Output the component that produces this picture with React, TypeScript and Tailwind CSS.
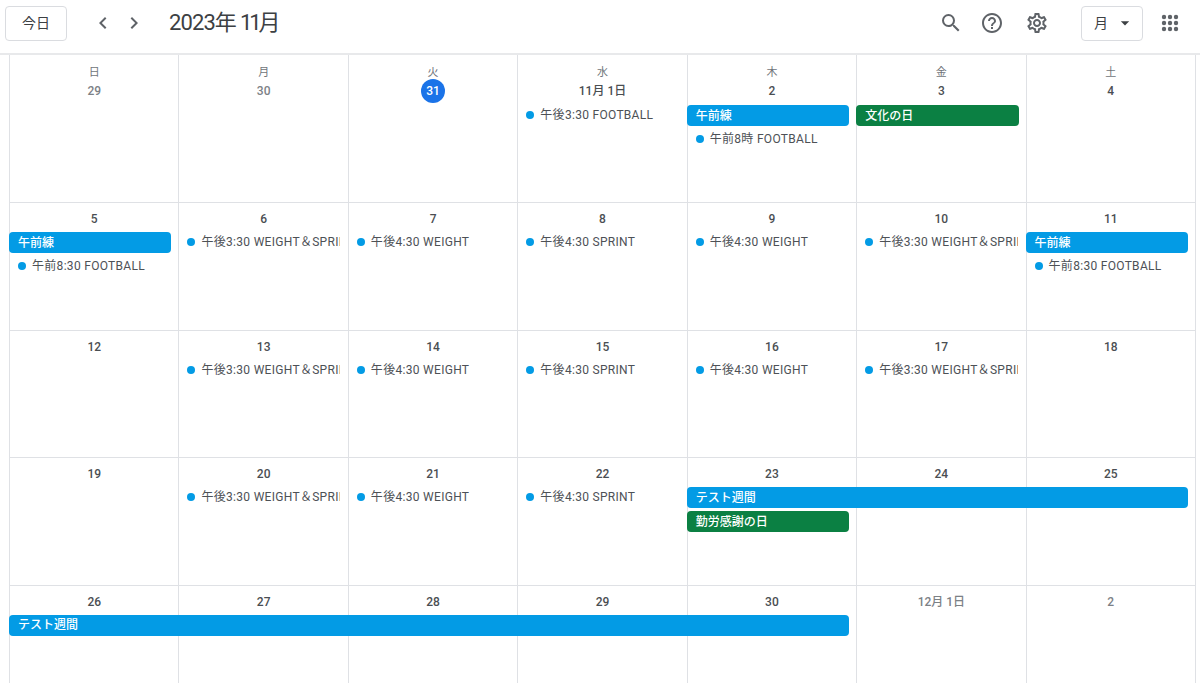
import { MdSearch, MdHelpOutline, MdOutlineSettings, MdChevronLeft, MdChevronRight, MdArrowDropDown } from 'react-icons/md';

type Ev = { col: string; row: string; label: string; kind: 'blue' | 'green' | 'timed'; span?: string };
type Day = { label: string; muted?: boolean; today?: boolean; weekday?: string };

const timed = (col: string, row: string, label: string): Ev => ({ col, row, label, kind: 'timed' });

const weeks: { days: Day[]; events: Ev[] }[] = [
  {
    days: [
      { label: '29', muted: true, weekday: '日' },
      { label: '30', muted: true, weekday: '月' },
      { label: '31', today: true, weekday: '火' },
      { label: '11月 1日', weekday: '水' },
      { label: '2', weekday: '木' },
      { label: '3', weekday: '金' },
      { label: '4', weekday: '土' },
    ],
    events: [
      timed('col-start-4', 'row-start-2', '午後3:30 FOOTBALL'),
      { col: 'col-start-5', row: 'row-start-2', label: '午前練', kind: 'blue' },
      timed('col-start-5', 'row-start-3', '午前8時 FOOTBALL'),
      { col: 'col-start-6', row: 'row-start-2', label: '文化の日', kind: 'green' },
    ],
  },
  {
    days: ['5', '6', '7', '8', '9', '10', '11'].map((label) => ({ label })),
    events: [
      { col: 'col-start-1', row: 'row-start-2', label: '午前練', kind: 'blue' },
      timed('col-start-1', 'row-start-3', '午前8:30 FOOTBALL'),
      timed('col-start-2', 'row-start-2', '午後3:30 WEIGHT＆SPRINT'),
      timed('col-start-3', 'row-start-2', '午後4:30 WEIGHT'),
      timed('col-start-4', 'row-start-2', '午後4:30 SPRINT'),
      timed('col-start-5', 'row-start-2', '午後4:30 WEIGHT'),
      timed('col-start-6', 'row-start-2', '午後3:30 WEIGHT＆SPRINT'),
      { col: 'col-start-7', row: 'row-start-2', label: '午前練', kind: 'blue' },
      timed('col-start-7', 'row-start-3', '午前8:30 FOOTBALL'),
    ],
  },
  {
    days: ['12', '13', '14', '15', '16', '17', '18'].map((label) => ({ label })),
    events: [
      timed('col-start-2', 'row-start-2', '午後3:30 WEIGHT＆SPRINT'),
      timed('col-start-3', 'row-start-2', '午後4:30 WEIGHT'),
      timed('col-start-4', 'row-start-2', '午後4:30 SPRINT'),
      timed('col-start-5', 'row-start-2', '午後4:30 WEIGHT'),
      timed('col-start-6', 'row-start-2', '午後3:30 WEIGHT＆SPRINT'),
    ],
  },
  {
    days: ['19', '20', '21', '22', '23', '24', '25'].map((label) => ({ label })),
    events: [
      timed('col-start-2', 'row-start-2', '午後3:30 WEIGHT＆SPRINT'),
      timed('col-start-3', 'row-start-2', '午後4:30 WEIGHT'),
      timed('col-start-4', 'row-start-2', '午後4:30 SPRINT'),
      { col: 'col-start-5', row: 'row-start-2', span: 'col-span-3', label: 'テスト週間', kind: 'blue' },
      { col: 'col-start-5', row: 'row-start-3', label: '勤労感謝の日', kind: 'green' },
    ],
  },
  {
    days: [
      { label: '26' },
      { label: '27' },
      { label: '28' },
      { label: '29' },
      { label: '30' },
      { label: '12月 1日', muted: true },
      { label: '2', muted: true },
    ],
    events: [{ col: 'col-start-1', row: 'row-start-2', span: 'col-span-5', label: 'テスト週間', kind: 'blue' }],
  },
];

const dayCols = ['col-start-1', 'col-start-2', 'col-start-3', 'col-start-4', 'col-start-5', 'col-start-6', 'col-start-7'];

const EventChip = ({ ev }: { ev: Ev }) => {
  if (ev.kind === 'timed') {
    return (
      <div className={`${ev.col} ${ev.row} z-10 mr-2 flex h-[20px] items-center overflow-hidden pl-[9px] text-xs tracking-[0.3px] whitespace-nowrap text-[#4d5156]`}>
        <span className="mr-[6px] h-2 w-2 shrink-0 rounded-full bg-[#039be5]" />
        <span>{ev.label}</span>
      </div>
    );
  }
  const bg = ev.kind === 'green' ? 'bg-[#0b8043]' : 'bg-[#039be5]';
  return (
    <div className={`${ev.col} ${ev.row} ${ev.span ?? 'col-span-1'} ${bg} z-10 mr-[7px] flex h-[21px] items-center rounded pl-[9px] text-xs font-medium whitespace-nowrap text-white`}>
      {ev.label}
    </div>
  );
};

const DayCell = ({ day, col, first }: { day: Day; col: string; first: boolean }) => (
  <div className={`${col} row-span-4 row-start-1 flex flex-col items-center border-l border-[#dfe1e5] ${first ? 'pt-[10px]' : 'pt-[6px]'}`}>
    {day.weekday && <div className="h-[16px] text-[11px] leading-4 text-[#70757a]">{day.weekday}</div>}
    {day.today ? (
      <div className="-mt-[2px] flex h-6 w-6 items-center justify-center rounded-full bg-[#1a73e8] text-xs font-medium text-white">{day.label}</div>
    ) : (
      <div className={`h-5 text-xs leading-5 font-medium ${day.muted ? 'text-[#7c8186]' : 'text-[#4a4e52]'}`}>{day.label}</div>
    )}
  </div>
);

export default function App() {
  return (
    <div className="h-[683px] w-[1200px] overflow-hidden bg-white font-['Roboto','Noto_Sans_CJK_JP',sans-serif]">
      <header className="flex h-[55px] items-center border-b-2 border-[#e8e9eb] pb-[7px] pl-[5px] text-[#5f6368]">
        <button className="h-[35px] w-[62px] rounded border border-[#dadce0] text-sm text-[#3c4043]">今日</button>
        <MdChevronLeft className="ml-[24px] text-[#5f6368]" size={24} />
        <MdChevronRight className="ml-[7px] text-[#5f6368]" size={24} />
        <h1 className="ml-[23px] flex text-[22px] leading-7 font-normal text-[#3c4043]">
          <span className="tracking-[-0.9px]">2023</span>
          <span>年</span>
          <span className="ml-[3px] tracking-[-3px]">11</span>
          <span>月</span>
        </h1>
        <div className="ml-auto flex items-center">
          <MdSearch size={24} />
          <MdHelpOutline className="ml-[17px]" size={24} />
          <MdOutlineSettings className="ml-[21px]" size={24} />
          <button className="ml-[32px] flex h-[35px] w-[62px] items-center rounded border border-[#dadce0] pl-3 text-sm text-[#3c4043]">
            月
            <MdArrowDropDown className="ml-[7px] text-[#3c4043]" size={20} />
          </button>
          <svg className="mr-[21px] ml-[18px]" width="18" height="18" viewBox="0 0 18 18" fill="#5f6368">
            {[3, 9, 15].map((cy) =>
              [3, 9, 15].map((cx) => <circle key={`${cx}-${cy}`} cx={cx} cy={cy} r="2.2" />),
            )}
          </svg>
        </div>
      </header>
      <main className="ml-[9px] w-[1187px] border-r border-[#dfe1e5]">
        {weeks.map((week, i) => (
          <div
            key={i}
            className={
              i === 0
                ? 'grid h-[147px] grid-cols-7 grid-rows-[50px_24px_24px_1fr]'
                : 'grid h-[127.5px] grid-cols-7 grid-rows-[29px_24px_24px_1fr] border-t border-[#dfe1e5]'
            }
          >
            {week.days.map((day, d) => (
              <DayCell key={d} day={day} col={dayCols[d]} first={i === 0} />
            ))}
            {week.events.map((ev, e) => (
              <EventChip key={e} ev={ev} />
            ))}
          </div>
        ))}
      </main>
    </div>
  );
}
